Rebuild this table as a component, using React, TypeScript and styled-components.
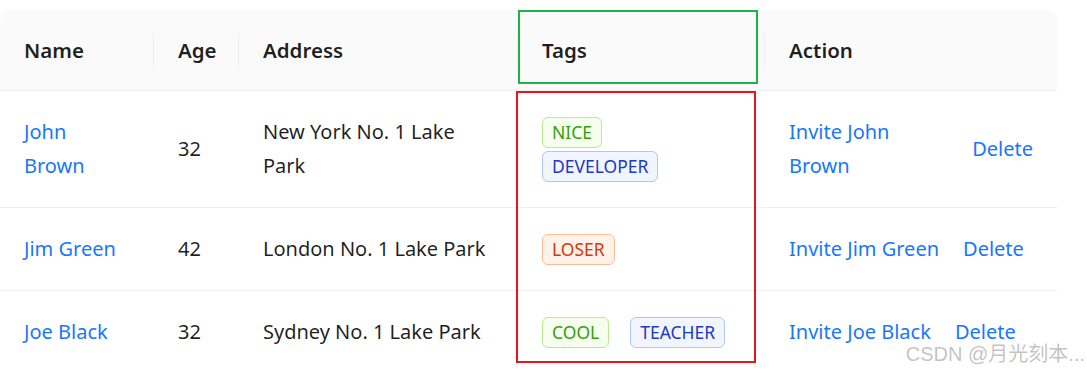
import React from 'react';
import styled, { createGlobalStyle } from 'styled-components';

const GlobalStyle = createGlobalStyle`
  body {
    margin: 0;
    background: #ffffff;
    font-family: "Noto Sans", "Open Sans", sans-serif;
    color: rgba(0, 0, 0, 0.88);
  }
`;

const Page = styled.div`
  position: relative;
  width: 1087px;
  height: 373px;
  overflow: hidden;
  padding-top: 10px;
  box-sizing: border-box;
`;

const Table = styled.table`
  width: 1057px;
  table-layout: fixed;
  border-collapse: separate;
  border-spacing: 0;
  font-size: 20px;
  line-height: 34px;
`;

const HeadCell = styled.th<{ $sep?: boolean }>`
  position: relative;
  text-align: left;
  font-weight: 600;
  font-size: 20.5px;
  padding: 23px 24px;
  background: #fafafa;
  border-bottom: 1px solid #f0f0f0;
  &:first-child {
    border-top-left-radius: 12px;
  }
  &:last-child {
    border-top-right-radius: 12px;
  }
  &::before {
    content: '';
    display: ${(p) => (p.$sep ? 'block' : 'none')};
    position: absolute;
    right: 0;
    top: 50%;
    width: 1px;
    height: 34px;
    transform: translateY(-50%);
    background: #f0f0f0;
  }
`;

const Cell = styled.td`
  padding: 24px;
  border-bottom: 1px solid #f0f0f0;
  vertical-align: middle;
`;

const Link = styled.a`
  color: #1677ff;
  text-decoration: none;
  cursor: pointer;
`;

const tagColors = {
  green: { color: '#389e0d', bg: '#f6ffed', border: '#b7eb8f' },
  geekblue: { color: '#1d39c4', bg: '#f0f5ff', border: '#adc6ff' },
  volcano: { color: '#d4380d', bg: '#fff2e8', border: '#ffbb96' },
};

type TagColor = keyof typeof tagColors;

const TagList = styled.div`
  display: flex;
  flex-wrap: wrap;
  max-width: 190px;
  gap: 3px 21px;
`;

const Tag = styled.span<{ $color: TagColor }>`
  display: inline-block;
  box-sizing: border-box;
  height: 31px;
  line-height: 29px;
  padding: 0 9px;
  font-size: 17.5px;
  border-radius: 6px;
  color: ${(p) => tagColors[p.$color].color};
  background: ${(p) => tagColors[p.$color].bg};
  border: 1px solid ${(p) => tagColors[p.$color].border};
`;

const Actions = styled.div`
  display: flex;
  align-items: center;
  gap: 24px;
`;

const Marker = styled.div<{ $color: string; $left: number; $top: number; $w: number; $h: number }>`
  position: absolute;
  left: ${(p) => p.$left}px;
  top: ${(p) => p.$top}px;
  width: ${(p) => p.$w}px;
  height: ${(p) => p.$h}px;
  box-sizing: border-box;
  border: 2px solid ${(p) => p.$color};
  pointer-events: none;
`;

const Watermark = styled.div`
  position: absolute;
  right: 2px;
  bottom: 6px;
  font-family: "Liberation Sans", "Noto Sans CJK SC", sans-serif;
  font-size: 20px;
  color: rgba(120, 120, 120, 0.45);
  text-shadow: 0 0 1px #fff;
  white-space: nowrap;
`;

interface Row {
  key: string;
  name: string;
  age: number;
  address: string;
  tags: string[];
}

const data: Row[] = [
  { key: '1', name: 'John Brown', age: 32, address: 'New York No. 1 Lake Park', tags: ['nice', 'developer'] },
  { key: '2', name: 'Jim Green', age: 42, address: 'London No. 1 Lake Park', tags: ['loser'] },
  { key: '3', name: 'Joe Black', age: 32, address: 'Sydney No. 1 Lake Park', tags: ['cool', 'teacher'] },
];

const tagColor = (tag: string): TagColor => {
  if (tag === 'loser') return 'volcano';
  return tag.length > 5 ? 'geekblue' : 'green';
};

export default function App() {
  return (
    <Page>
      <GlobalStyle />
      <Table>
        <colgroup>
          <col style={{ width: 154 }} />
          <col style={{ width: 85 }} />
          <col style={{ width: 279 }} />
          <col style={{ width: 247 }} />
          <col style={{ width: 292 }} />
        </colgroup>
        <thead>
          <tr>
            <HeadCell $sep>Name</HeadCell>
            <HeadCell $sep>Age</HeadCell>
            <HeadCell $sep>Address</HeadCell>
            <HeadCell $sep>Tags</HeadCell>
            <HeadCell>Action</HeadCell>
          </tr>
        </thead>
        <tbody>
          {data.map((row) => (
            <tr key={row.key}>
              <Cell>
                <Link>{row.name}</Link>
              </Cell>
              <Cell>{row.age}</Cell>
              <Cell>{row.address}</Cell>
              <Cell>
                <TagList>
                  {row.tags.map((tag) => (
                    <Tag key={tag} $color={tagColor(tag)}>
                      {tag.toUpperCase()}
                    </Tag>
                  ))}
                </TagList>
              </Cell>
              <Cell>
                <Actions>
                  <Link>Invite {row.name}</Link>
                  <Link>Delete</Link>
                </Actions>
              </Cell>
            </tr>
          ))}
        </tbody>
      </Table>
      <Marker $color="#1db34a" $left={518} $top={10} $w={240} $h={74} />
      <Marker $color="#e8141e" $left={516} $top={91} $w={240} $h={272} />
      <Watermark>CSDN @月光刻本...</Watermark>
    </Page>
  );
}
